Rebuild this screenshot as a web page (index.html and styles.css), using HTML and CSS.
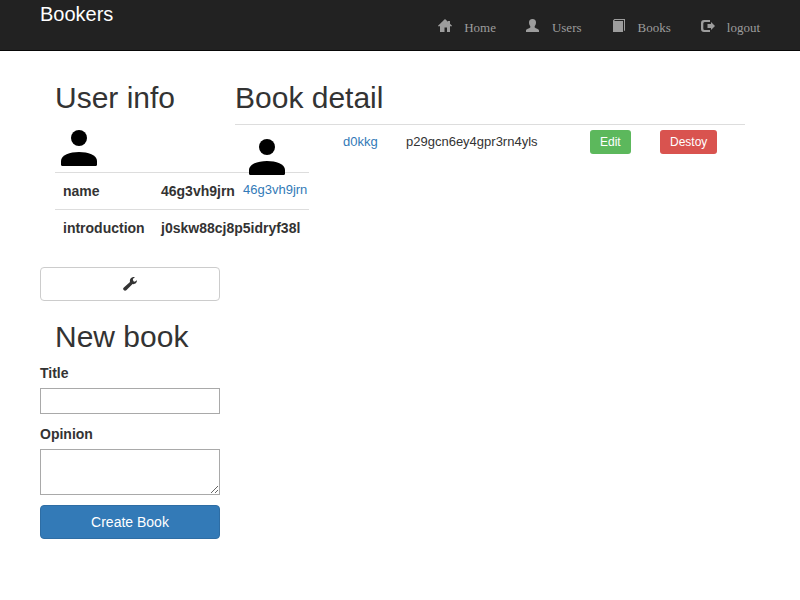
FILE: index.html
```html
<!DOCTYPE html>
<html lang="en">
<head>
<meta charset="utf-8">
<title>Bookers</title>
<link rel="stylesheet" href="styles.css">
</head>
<body>
<header class="navbar">
  <a class="brand">Bookers</a>
  <nav class="nav">
    <a class="nav-link"><svg class="icon" viewBox="0 0 14 14"><path d="M7 0l3 2.800V2h2v2.700l2 2V7.300h-2V13H9V8.500H6.500V13H2V7.300H0v-.6z"/></svg><span>Home</span></a>
    <a class="nav-link"><svg class="icon" viewBox="0 0 14 14"><path d="M6.500 0C8.800 0 10 1.300 10 3.500c0 1.800-.7 3-1.300 3.800v1.200c1.100 1 4.300 1.500 4.300 3V13H0v-1.500c0-1.500 3.200-2 4.300-3V7.300C3.700 6.500 3 5.300 3 3.500 3 1.300 4.200 0 6.500 0z"/></svg><span>Users</span></a>
    <a class="nav-link"><svg class="icon" viewBox="0 0 14 14"><path d="M2.300 0H13v11.500l-1 .5V1H3L2 2h9v11H1V1.500z"/></svg><span>Books</span></a>
    <a class="nav-link"><svg class="icon" viewBox="0 0 14 14"><path d="M9 1v2H3.700Q2.300 3 2.300 4.500v5Q2.300 11 3.700 11H9v2H3Q0 13 0 10V4q0-3 3-3zM10 3l4 4-4 4V9H6.500V5H10z"/></svg><span>logout</span></a>
  </nav>
</header>
<main class="container">
  <aside class="sidebar">
    <h2>User info</h2>
    <svg class="avatar" viewBox="0 0 36 36"><circle cx="18" cy="8" r="8"/><path d="M0 31c0-6 9-9 18-9s18 3 18 9v3.500q0 1.500-1.500 1.500h-33Q0 36 0 34.500z"/></svg>
    <table class="info">
      <tr><th>name</th><th>46g3vh9jrn</th></tr>
      <tr><th>introduction</th><th>j0skw88cj8p5idryf38l</th></tr>
    </table>
    <a class="btn btn-default"><svg class="icon" viewBox="0 0 14 14"><path d="M12 0 9.800 2l.6 2.300 1.300.5L14 3.200c.2 2.500-2 4.400-4.400 3.900L3.300 13.300C1.600 14.800-.9 12.400.6 10.700L7 5C6.200 1.900 8.700-.5 12 0z"/></svg></a>
    <form class="book-form">
      <h2>New book</h2>
      <label for="title">Title</label>
      <input id="title" type="text">
      <label for="opinion">Opinion</label>
      <textarea id="opinion"></textarea>
      <button class="btn btn-primary" type="button">Create Book</button>
    </form>
  </aside>
  <section class="detail">
    <h2>Book detail</h2>
    <div class="book-row">
      <a class="author"><svg class="avatar" viewBox="0 0 36 36"><circle cx="18" cy="8" r="8"/><path d="M0 31c0-6 9-9 18-9s18 3 18 9v3.500q0 1.500-1.500 1.500h-33Q0 36 0 34.500z"/></svg><span>46g3vh9jrn</span></a>
      <a class="title">d0kkg</a>
      <span class="opinion">p29gcn6ey4gpr3rn4yls</span>
      <span><a class="btn-sm edit">Edit</a></span>
      <span><a class="btn-sm destroy">Destoy</a></span>
    </div>
  </section>
</main>
</body>
</html>
```
FILE: styles.css
```css
* { box-sizing: border-box; }
body {
  margin: 0;
  background: #fff;
  color: #333;
  font: 14px/20px "Liberation Sans", Arial, sans-serif;
}
h2 { margin: 0; font-size: 30px; font-weight: 500; line-height: 33px; }
a { color: #337ab7; text-decoration: none; }
.navbar {
  display: flex;
  justify-content: space-between;
  height: 51px;
  padding: 0 40px;
  background: #222;
  border-bottom: 1px solid #080808;
}
.brand { color: #fff; font-size: 20px; line-height: 28px; }
.nav { display: flex; gap: 30px; padding-top: 18px; }
.nav-link {
  display: flex;
  gap: 12px;
  color: #9d9d9d;
  font: 13px/20px "Liberation Serif", serif;
}
.icon { display: block; width: 14px; height: 14px; fill: currentColor; }
.nav-link .icon { margin-top: 1px; }
.container { display: flex; gap: 15px; padding: 30px 40px 0; }
.sidebar { width: 180px; flex: none; }
.sidebar h2 { padding-left: 15px; white-space: nowrap; }
.avatar { display: block; width: 36px; height: 36px; fill: #000; }
.sidebar .avatar { margin: 16px 0 6px 21px; }
.info { width: 254px; margin-left: 15px; border-collapse: collapse; }
.info th {
  height: 37px;
  padding: 8px;
  border-top: 1px solid #ddd;
  text-align: left;
  white-space: nowrap;
}
.info th:first-child { width: 98px; }
.btn {
  display: flex;
  align-items: center;
  justify-content: center;
  width: 180px;
  height: 34px;
  border: 1px solid #ccc;
  border-radius: 4px;
  font: 14px/20px "Liberation Sans", Arial, sans-serif;
}
.btn-default { margin-top: 20px; color: #333; }
.btn-primary { margin-top: 10px; background: #337ab7; border-color: #2e6da4; color: #fff; }
.book-form { padding-top: 19px; }
.book-form label { display: block; margin: 10px 0 5px; font-weight: 700; }
.book-form input,
.book-form textarea {
  display: block;
  width: 180px;
  height: 26px;
  margin: 0;
  border: 1px solid #a9a9a9;
  border-radius: 0;
  background: #fff;
}
.book-form textarea { height: 46px; }
.detail { width: 510px; }
.book-row {
  display: grid;
  grid-template-columns: 100px 63px 184px 70px 77px;
  margin-top: 10px;
  padding: 5px 8px;
  border-top: 1px solid #ddd;
  font-size: 13px;
}
.author { padding-top: 9px; }
.author .avatar { margin: 0 0 5px 6px; }
.author span, .title, .opinion { display: block; line-height: 19px; }
.title, .opinion { padding-top: 2px; }
.btn-sm {
  display: inline-block;
  height: 24px;
  padding: 0 10px;
  border-radius: 3px;
  color: #fff;
  font-size: 12px;
  line-height: 24px;
}
.edit { background: #5cb85c; }
.destroy { background: #d9534f; }
```
